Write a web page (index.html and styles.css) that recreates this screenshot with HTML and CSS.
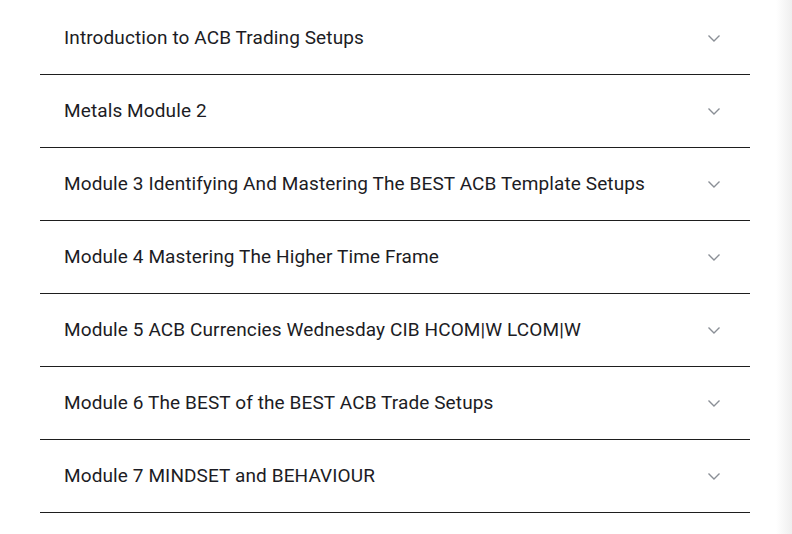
FILE: index.html
```html
<!DOCTYPE html>
<html>
<head>
<meta charset="utf-8">
<link rel="stylesheet" href="styles.css">
</head>
<body>
<div class="page">
  <div class="main">
    <div class="accordion">
      <div class="item"><span class="title">Introduction to ACB Trading Setups</span><svg class="chev" viewBox="0 0 12 7" width="12" height="7"><path d="M0.5 0.5 L6 6 L11.5 0.5" fill="none" stroke="#8a8f96" stroke-width="1.4"/></svg></div>
      <div class="item"><span class="title">Metals Module 2</span><svg class="chev" viewBox="0 0 12 7" width="12" height="7"><path d="M0.5 0.5 L6 6 L11.5 0.5" fill="none" stroke="#8a8f96" stroke-width="1.4"/></svg></div>
      <div class="item"><span class="title">Module 3 Identifying And Mastering The BEST ACB Template Setups</span><svg class="chev" viewBox="0 0 12 7" width="12" height="7"><path d="M0.5 0.5 L6 6 L11.5 0.5" fill="none" stroke="#8a8f96" stroke-width="1.4"/></svg></div>
      <div class="item"><span class="title">Module 4 Mastering The Higher Time Frame</span><svg class="chev" viewBox="0 0 12 7" width="12" height="7"><path d="M0.5 0.5 L6 6 L11.5 0.5" fill="none" stroke="#8a8f96" stroke-width="1.4"/></svg></div>
      <div class="item"><span class="title">Module 5 ACB Currencies Wednesday CIB HCOM|W LCOM|W</span><svg class="chev" viewBox="0 0 12 7" width="12" height="7"><path d="M0.5 0.5 L6 6 L11.5 0.5" fill="none" stroke="#8a8f96" stroke-width="1.4"/></svg></div>
      <div class="item"><span class="title">Module 6 The BEST of the BEST ACB Trade Setups</span><svg class="chev" viewBox="0 0 12 7" width="12" height="7"><path d="M0.5 0.5 L6 6 L11.5 0.5" fill="none" stroke="#8a8f96" stroke-width="1.4"/></svg></div>
      <div class="item"><span class="title">Module 7 MINDSET and BEHAVIOUR</span><svg class="chev" viewBox="0 0 12 7" width="12" height="7"><path d="M0.5 0.5 L6 6 L11.5 0.5" fill="none" stroke="#8a8f96" stroke-width="1.4"/></svg></div>
    </div>
  </div>
  <div class="edge"></div>
</div>
</body>
</html>
```
FILE: styles.css
```css
html, body {
  margin: 0;
  padding: 0;
  background: #ffffff;
}
.page {
  display: flex;
  width: 792px;
  height: 534px;
  overflow: hidden;
}
.main {
  flex: 1;
  padding-left: 40px;
}
.accordion {
  width: 710px;
  padding-top: 2px;
}
.item {
  height: 72px;
  border-bottom: 1px solid #1e1e1e;
  display: flex;
  align-items: center;
  justify-content: space-between;
  padding: 0 30px 0 24px;
}
.title {
  font-family: Roboto, "Liberation Sans", sans-serif;
  font-size: 19px;
  letter-spacing: 0.11px;
  color: #1c1c24;
  margin-top: -2px;
}
.chev {
  display: block;
  margin-top: 1px;
}
.edge {
  width: 16px;
  background: linear-gradient(to right, #ffffff, #efefef);
}
```
